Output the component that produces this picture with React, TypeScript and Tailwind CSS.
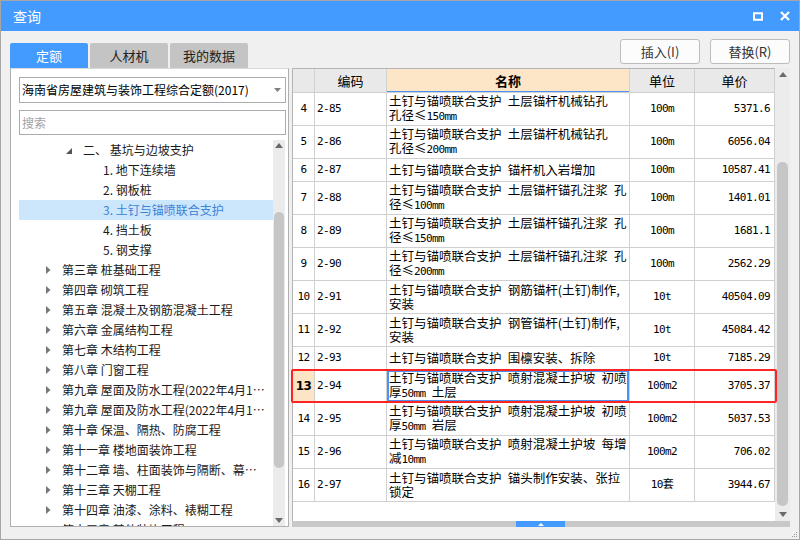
import React from "react";

type Row = { n: number; code: string; name: string[]; unit: string; price: string };

const rows: Row[] = [
  { n: 4, code: "2-85", name: ["土钉与锚喷联合支护 土层锚杆机械钻孔", "孔径≤150mm"], unit: "100m", price: "5371.6" },
  { n: 5, code: "2-86", name: ["土钉与锚喷联合支护 土层锚杆机械钻孔", "孔径≤200mm"], unit: "100m", price: "6056.04" },
  { n: 6, code: "2-87", name: ["土钉与锚喷联合支护 锚杆机入岩增加"], unit: "100m", price: "10587.41" },
  { n: 7, code: "2-88", name: ["土钉与锚喷联合支护 土层锚杆锚孔注浆 孔", "径≤100mm"], unit: "100m", price: "1401.01" },
  { n: 8, code: "2-89", name: ["土钉与锚喷联合支护 土层锚杆锚孔注浆 孔", "径≤150mm"], unit: "100m", price: "1681.1" },
  { n: 9, code: "2-90", name: ["土钉与锚喷联合支护 土层锚杆锚孔注浆 孔", "径≤200mm"], unit: "100m", price: "2562.29" },
  { n: 10, code: "2-91", name: ["土钉与锚喷联合支护 钢筋锚杆(土钉)制作,", "安装"], unit: "10t", price: "40504.09" },
  { n: 11, code: "2-92", name: ["土钉与锚喷联合支护 钢管锚杆(土钉)制作,", "安装"], unit: "10t", price: "45084.42" },
  { n: 12, code: "2-93", name: ["土钉与锚喷联合支护 围檩安装、拆除"], unit: "10t", price: "7185.29" },
  { n: 13, code: "2-94", name: ["土钉与锚喷联合支护 喷射混凝土护坡 初喷", "厚50mm 土层"], unit: "100m2", price: "3705.37" },
  { n: 14, code: "2-95", name: ["土钉与锚喷联合支护 喷射混凝土护坡 初喷", "厚50mm 岩层"], unit: "100m2", price: "5037.53" },
  { n: 15, code: "2-96", name: ["土钉与锚喷联合支护 喷射混凝土护坡 每增", "减10mm"], unit: "100m2", price: "706.02" },
  { n: 16, code: "2-97", name: ["土钉与锚喷联合支护 锚头制作安装、张拉", "锁定"], unit: "10套", price: "3944.67" },
];

type Node = { text: string; lvl: number; sel?: boolean };

const tree: Node[] = [
  { text: "二、 基坑与边坡支护", lvl: 1 },
  { text: "1. 地下连续墙", lvl: 2 },
  { text: "2. 钢板桩", lvl: 2 },
  { text: "3. 土钉与锚喷联合支护", lvl: 2, sel: true },
  { text: "4. 挡土板", lvl: 2 },
  { text: "5. 钢支撑", lvl: 2 },
  { text: "第三章 桩基础工程", lvl: 0 },
  { text: "第四章 砌筑工程", lvl: 0 },
  { text: "第五章 混凝土及钢筋混凝土工程", lvl: 0 },
  { text: "第六章 金属结构工程", lvl: 0 },
  { text: "第七章 木结构工程", lvl: 0 },
  { text: "第八章 门窗工程", lvl: 0 },
  { text: "第九章 屋面及防水工程(2022年4月1日起执行)", lvl: 0 },
  { text: "第九章 屋面及防水工程(2022年4月1日前执行)", lvl: 0 },
  { text: "第十章 保温、隔热、防腐工程", lvl: 0 },
  { text: "第十一章 楼地面装饰工程", lvl: 0 },
  { text: "第十二章 墙、柱面装饰与隔断、幕墙工程", lvl: 0 },
  { text: "第十三章 天棚工程", lvl: 0 },
  { text: "第十四章 油漆、涂料、裱糊工程", lvl: 0 },
  { text: "第十五章 其他装饰工程", lvl: 0 },
];

const mono = "font-['DejaVu_Sans_Mono','Noto_Sans_CJK_SC',monospace] text-[11px] tracking-[-0.6px]";

// letters/digits in the half-width mono face, like the grid's old bitmap font
function Mixed({ text }: { text: string }) {
  const parts = text.split(/([0-9A-Za-z.]+)/);
  return (
    <>
      {parts.map((p, i) =>
        i % 2 === 1 ? (
          <span key={i} className={mono}>{p}</span>
        ) : (
          <span key={i}>{p.replace(/ /g, "\u2002")}</span>
        )
      )}
    </>
  );
}

function Up() {
  return (
    <svg width="8" height="5" viewBox="0 0 8 5"><polygon points="0,5 4,0 8,5" fill="#6a6a6a" /></svg>
  );
}

function Down() {
  return (
    <svg width="8" height="5" viewBox="0 0 8 5"><polygon points="0,0 8,0 4,5" fill="#6a6a6a" /></svg>
  );
}

function TreeRow({ node }: { node: Node }) {
  const pad = node.lvl === 0 ? "pl-[27px]" : node.lvl === 1 ? "pl-[47px]" : "pl-[84px]";
  return (
    <div className={`flex items-center h-[20px] shrink-0 pr-[5px] ${pad} ${node.sel ? "bg-[#cce6fc] text-[#3d82d8]" : "text-[#1a1a1a]"}`}>
      {node.lvl === 0 && (
        <svg width="5" height="8" viewBox="0 0 5 8" className="shrink-0 mr-[11px]"><polygon points="0,0 4.5,4 0,8" fill="#777" /></svg>
      )}
      {node.lvl === 1 && (
        <svg width="6" height="6" viewBox="0 0 6 6" className="shrink-0 mr-[11px] mt-[2px]"><polygon points="6,0 6,6 0,6" fill="#555" /></svg>
      )}
      <span className="whitespace-pre overflow-hidden text-ellipsis">{node.text}</span>
    </div>
  );
}

function TableRow({ r }: { r: Row }) {
  const cur = r.n === 13;
  const h = r.name.length > 1 ? "h-[33px]" : "h-[23px]";
  return (
    <div className={`relative flex ${h} border-b border-[#d0d0d0] text-black`}>
      <div className={`w-[22px] shrink-0 border-r border-[#d0d0d0] flex items-center justify-center ${cur ? "bg-[#fde4c4] font-bold text-[12px] font-['DejaVu_Sans',sans-serif] tracking-[-0.5px]" : mono}`}>{r.n}</div>
      <div className={`w-[72px] shrink-0 border-r border-[#d0d0d0] flex items-center pl-[2px] ${mono}`}>{r.code}</div>
      <div className={`w-[243px] shrink-0 border-r border-[#d0d0d0] flex flex-col justify-center pl-[2px] text-[12.5px] leading-[14px] ${cur ? "shadow-[inset_0_0_0_2px_#4a93f5]" : ""}`}>
        {r.name.map((l) => (
          <div key={l} className="whitespace-pre">
            <Mixed text={l} />
          </div>
        ))}
      </div>
      <div className={`w-[65px] shrink-0 border-r border-[#d0d0d0] flex items-center justify-center ${mono}`}>{r.unit}</div>
      <div className={`w-[80px] shrink-0 border-r border-[#d0d0d0] flex items-center justify-end pr-[4px] ${mono}`}>{r.price}</div>
      {cur && <div className="absolute -top-[1px] -bottom-[1px] -left-[2px] -right-[2px] border-2 border-[#ff2424] rounded-[2px] z-10" />}
    </div>
  );
}

export default function App() {
  return (
    <div className="w-[800px] h-[540px] bg-[#f0f0f0] border border-[#a6a6a6] flex flex-col overflow-hidden font-['Noto_Sans_CJK_SC','Noto_Sans',sans-serif] text-[12px]">
      <div className="h-[30px] bg-[#449bff] flex items-center pl-[12px] pr-[9px] text-white shrink-0">
        <span className="text-[14px]">查询</span>
        <div className="ml-auto flex items-center gap-[17px]">
          <svg width="10" height="9" viewBox="0 0 10 9"><rect x="1" y="1.25" width="8" height="6.5" fill="none" stroke="#fff" strokeWidth="2" /></svg>
          <svg width="10" height="10" viewBox="0 0 10 10"><path d="M1 1 L9 9 M9 1 L1 9" stroke="#fff" strokeWidth="2.2" /></svg>
        </div>
      </div>

      <div className="h-[37px] flex px-[9px] shrink-0">
        <div className="flex items-end gap-[2px]">
          <div className="w-[78px] h-[25px] bg-[#449bff] text-white rounded-t-[2px] flex items-center justify-center text-[13px]">定额</div>
          <div className="w-[78px] h-[25px] bg-[#c4c4c4] text-[#222] rounded-t-[2px] flex items-center justify-center text-[13px]">人材机</div>
          <div className="w-[78px] h-[25px] bg-[#c4c4c4] text-[#222] rounded-t-[2px] flex items-center justify-center text-[13px]">我的数据</div>
        </div>
        <div className="ml-auto flex gap-[10px] mt-[8px] h-[25px]">
          <button className="w-[80px] bg-[#fcfcfc] border border-[#bdbdbd] rounded-[3px] text-[13px] text-[#333]">插入(I)</button>
          <button className="w-[80px] bg-[#fcfcfc] border border-[#bdbdbd] rounded-[3px] text-[13px] text-[#333]">替换(R)</button>
        </div>
      </div>

      <div className="h-[459px] flex gap-[3px] px-[9px] shrink-0">
        <div className="w-[279px] bg-white border border-[#b0b0b0] border-t-[#d8d8d8] flex flex-col pt-[8px]">
          <div className="ml-[8px] mr-[2px] h-[26px] border border-[#ababab] flex items-center pl-[2px] pr-[4px] text-[12px] text-black shrink-0">
            <span className="whitespace-nowrap">海南省房屋建筑与装饰工程综合定额(2017)</span>
            <svg width="7" height="4" viewBox="0 0 7 4" className="ml-auto"><polygon points="0,0 7,0 3.5,4" fill="#808080" /></svg>
          </div>
          <div className="ml-[8px] mr-[2px] mt-[7px] h-[25px] border border-[#ababab] flex items-center pl-[2px] text-[12px] text-[#a3a3a3] shrink-0">搜索</div>
          <div className="mt-[5px] ml-[8px] mr-[2px] flex-1 flex min-h-0">
            <div className="w-[254px] flex flex-col overflow-hidden">
              {tree.map((n) => (
                <TreeRow key={n.text} node={n} />
              ))}
            </div>
            <div className="w-[12px] bg-[#ebebeb] flex flex-col items-center">
              <div className="h-[8px] flex items-end"><Up /></div>
              <div className="w-[10px] h-[256px] bg-[#c6c6c6] rounded-[5px] mt-[64px]" />
              <div className="mt-auto mb-[3px]"><Down /></div>
            </div>
          </div>
        </div>

        <div className="w-[498px] flex flex-col">
          <div className="flex-1 flex min-h-0">
            <div className="w-[483px] bg-white border-l border-t border-[#b4b4b4] flex flex-col">
              <div className="h-[24px] flex border-b border-[#d0d0d0] text-[13px] text-black shrink-0">
                <div className="w-[22px] border-r border-[#d0d0d0] bg-[#e9e9e9]" />
                <div className="w-[72px] border-r border-[#d0d0d0] bg-[#e9e9e9] flex items-center justify-center">编码</div>
                <div className="w-[243px] border-r border-[#d0d0d0] bg-[#fde6c8] flex items-center justify-center font-bold shadow-[inset_0_-1px_0_#4a93f5]">名称</div>
                <div className="w-[65px] border-r border-[#d0d0d0] bg-[#e9e9e9] flex items-center justify-center">单位</div>
                <div className="w-[80px] border-r border-[#d0d0d0] bg-[#e9e9e9] flex items-center justify-center">单价</div>
              </div>
              {rows.map((r) => (
                <TableRow key={r.n} r={r} />
              ))}
            </div>
            <div className="w-[15px] bg-[#ececec] flex flex-col items-center pt-[4px]">
              <Up />
              <div className="w-[11px] h-[344px] bg-[#c6c6c6] rounded-[5px] mt-[85px]" />
              <div className="mt-auto mb-[4px]"><Down /></div>
            </div>
          </div>
          <div className="h-[6px] bg-[#c8c8c8] flex shrink-0">
            <div className="ml-[224px] w-[49px] h-[6px] bg-[#449bff] flex items-center justify-center">
              <svg width="6" height="3" viewBox="0 0 6 3"><polygon points="0,3 3,0 6,3" fill="#fff" /></svg>
            </div>
          </div>
        </div>
      </div>

      <div className="flex-1 flex justify-end items-end pr-[1px] pb-[1px]">
        <svg width="7" height="7" viewBox="0 0 7 7">
          <rect x="5" y="1" width="1" height="1" fill="#999" />
          <rect x="3" y="3" width="1" height="1" fill="#999" />
          <rect x="5" y="3" width="1" height="1" fill="#999" />
          <rect x="1" y="5" width="1" height="1" fill="#999" />
          <rect x="3" y="5" width="1" height="1" fill="#999" />
          <rect x="5" y="5" width="1" height="1" fill="#999" />
        </svg>
      </div>
    </div>
  );
}
